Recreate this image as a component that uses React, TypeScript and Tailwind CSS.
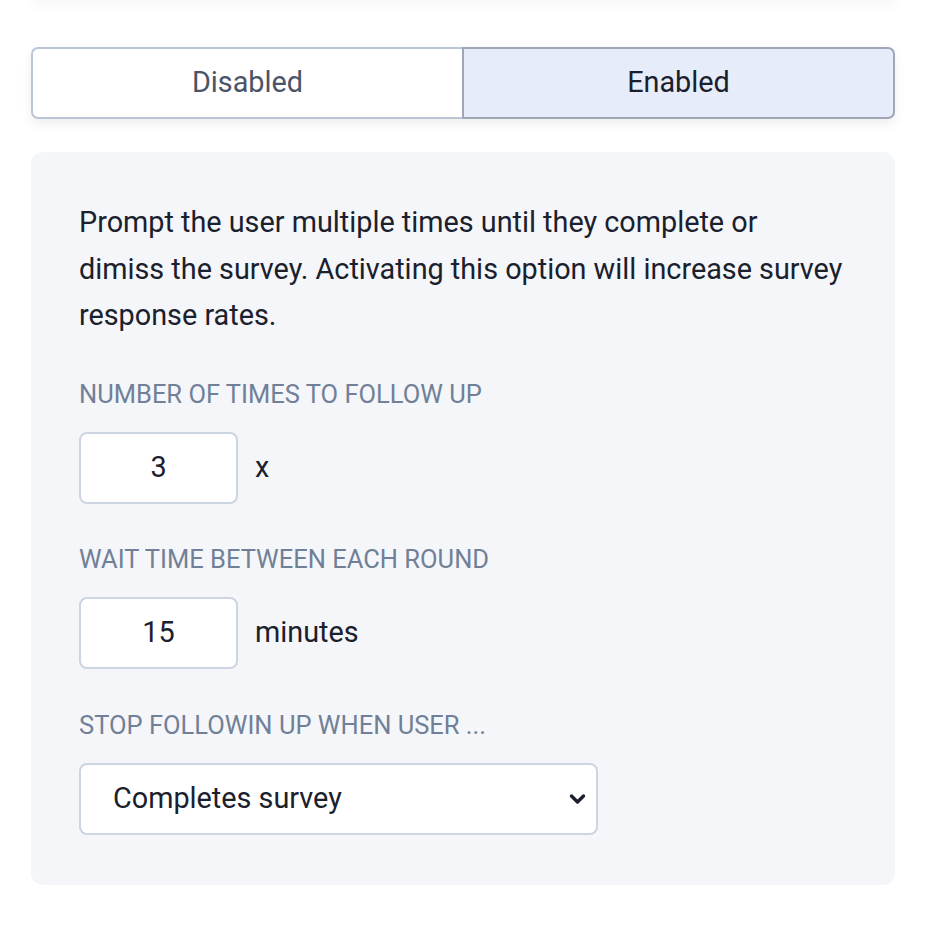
import React from "react";

export default function App() {
  return (
    <div
      className="min-h-[938px] w-[930px] bg-white"
      style={{ fontFamily: "Roboto, 'Liberation Sans', sans-serif" }}
    >
      <div className="pl-[31px] pr-[35px]">
        <div className="-mt-[30px] h-[30px] rounded-md bg-white shadow-[0_6px_14px_rgba(0,0,0,0.035)]" />
        <div className="mt-[47px] flex h-[72px] rounded-[7px] shadow-[0_5px_12px_rgba(0,0,0,0.07)]">
          <button className="flex flex-1 items-center justify-center rounded-l-[7px] border-2 border-r-0 border-[#bcc5d5] bg-white text-[28.8px] text-[#4a5468]">
            Disabled
          </button>
          <button className="flex flex-1 items-center justify-center rounded-r-[7px] border-2 border-[#9ea6b8] bg-[#e6ecf9] text-[28.8px] text-[#1a202c]">
            Enabled
          </button>
        </div>
        <div className="mt-[33px] rounded-[12px] bg-[#f4f6fa] px-[48px] pb-[50px] pt-[47px]">
          <p className="text-[28.8px] leading-[46.5px] text-[#1a202c]">
            Prompt the user multiple times until they complete or dimiss the survey. Activating this option will increase survey response rates.
          </p>
          <div className="mt-[36px] text-[25.5px] leading-[39px] text-[#718096]">
            NUMBER OF TIMES TO FOLLOW UP
          </div>
          <div className="mt-[18px] flex items-center">
            <div className="flex h-[72px] w-[159px] items-center justify-center rounded-[8px] border-2 border-[#cdd4e2] bg-white text-[28.8px] text-[#1a202c]">
              3
            </div>
            <span className="ml-[17px] text-[28.8px] text-[#1a202c]">x</span>
          </div>
          <div className="mt-[36px] text-[25.5px] leading-[39px] text-[#718096]">
            WAIT TIME BETWEEN EACH ROUND
          </div>
          <div className="mt-[18px] flex items-center">
            <div className="flex h-[72px] w-[159px] items-center justify-center rounded-[8px] border-2 border-[#cdd4e2] bg-white text-[28.8px] text-[#1a202c]">
              15
            </div>
            <span className="ml-[17px] text-[28.8px] text-[#1a202c]">minutes</span>
          </div>
          <div className="mt-[37px] text-[25.5px] leading-[39px] text-[#718096]">
            STOP FOLLOWIN UP WHEN USER ...
          </div>
          <div className="mt-[18px] flex h-[72px] w-[519px] items-center justify-between rounded-[8px] border-2 border-[#cdd4e2] bg-white pl-[32px] pr-[10px] text-[28.8px] text-[#1a202c]">
            <span>Completes survey</span>
            <svg width="17" height="12" viewBox="0 0 17 12">
              <path d="M2.5 3 L8.5 9 L14.5 3" fill="none" stroke="#1a202c" strokeWidth="3.4" strokeLinecap="round" strokeLinejoin="round" />
            </svg>
          </div>
        </div>
      </div>
    </div>
  );
}
